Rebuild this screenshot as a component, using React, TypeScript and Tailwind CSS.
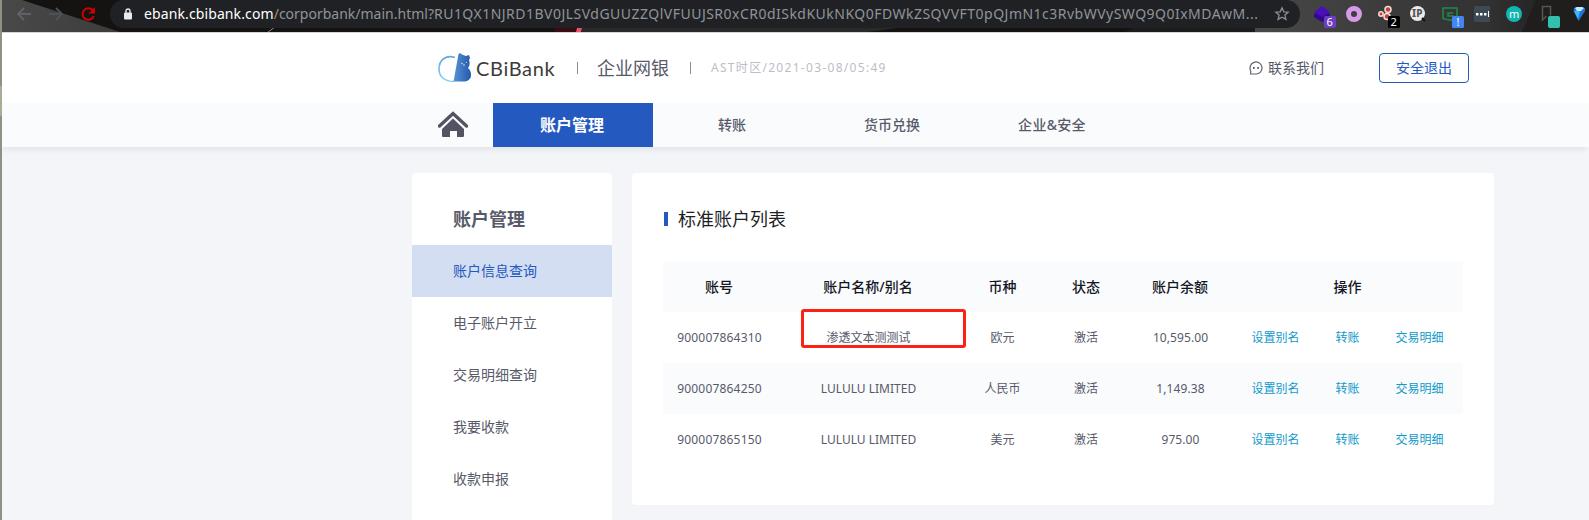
import React from "react";

const rows = [
  { no: "900007864310", name: "渗透文本测测试", cur: "欧元", status: "激活", amount: "10,595.00" },
  { no: "900007864250", name: "LULULU LIMITED", cur: "人民币", status: "激活", amount: "1,149.38" },
  { no: "900007865150", name: "LULULU LIMITED", cur: "美元", status: "激活", amount: "975.00" },
];
const menu = ["账户信息查询", "电子账户开立", "交易明细查询", "我要收款", "收款申报"];
const grid = "grid h-[51px] grid-cols-[112px_186px_83px_84px_104px_231px] items-center justify-items-center";

function Extensions() {
  return (
    <svg className="h-8 w-[287px] shrink-0" viewBox="1302 0 287 32" fontFamily="Noto Sans, sans-serif">
      <path d="M1314 14l8-3 8 3v3l-8 5-8-5z" fill="#33098a" />
      <path d="M1322 6l8 6-8 5-8-5z" fill="#4a0fb8" />
      <rect x="1324" y="16" width="12" height="12" rx="2" fill="#6b3fc0" />
      <text x="1326.500" y="26" fontSize="11" fill="#fff">6</text>
      <circle cx="1354" cy="14" r="5.500" fill="none" stroke="#d59bea" strokeWidth="5" />
      <g fill="#c9403a" stroke="#f4dcda" strokeWidth="1.500">
        <circle cx="1381" cy="14" r="2.200" />
        <circle cx="1388" cy="9.500" r="3" />
        <circle cx="1387" cy="16.500" r="3" />
      </g>
      <rect x="1388" y="16" width="12" height="12" rx="1.500" fill="#000" />
      <text x="1390.500" y="26" fontSize="11" fill="#fff">2</text>
      <circle cx="1417.500" cy="13.500" r="7.500" fill="#ececec" />
      <path d="M1422 18l3 3" stroke="#111" strokeWidth="2" />
      <text x="1412" y="17" fontSize="10" fontWeight="800" fill="#555">IP</text>
      <path d="M1443 19V8h14v10M1443 19h4M1453 13h-5v3h5v4h-6" fill="none" stroke="#1d8a4a" strokeWidth="1.600" />
      <rect x="1452" y="16" width="12" height="12" rx="1.500" fill="#4286f5" />
      <text x="1456.500" y="26" fontSize="11" fill="#fff">!</text>
      <rect x="1474" y="6" width="16" height="16" rx="1" fill="#3d4a55" />
      <path d="M1476 13h2.500v2.500h-2.500zM1480 13h2.500v2.500h-2.500zM1484 13h2.500v2.500h-2.500zM1488 11h1v6h-1z" fill="#fff" />
      <circle cx="1514" cy="14" r="8" fill="#12b5b0" />
      <text x="1509" y="18" fontSize="11" fill="#fff">m</text>
      <path d="M1542.500 6.500h8v9M1542.500 6v14l4-4" fill="none" stroke="#555" strokeWidth="1.500" />
      <rect x="1548" y="16" width="12" height="12" rx="2" fill="#32c1ac" />
      <path d="M1574 8l3-1h5l3 1v3l-6.500 10-5-10z" fill="#1878dc" />
      <path d="M1575 8l2-1h5l2 1-3 3h-4z" fill="#c5e8fb" />
      <path d="M1574 11h6l-2 8z" fill="#46b4f5" />
    </svg>
  );
}

function BrowserBar() {
  return (
    <div className="relative h-[33px] border-b border-[#d5d6d8] bg-[#141312]">
      <svg className="absolute inset-0 h-8 w-full" viewBox="0 0 1589 32" preserveAspectRatio="none">
        <defs>
          <linearGradient id="wedge" x1="0" x2="1">
            <stop offset="0" stopColor="#494949" />
            <stop offset="1" stopColor="#3c3c3c" />
          </linearGradient>
          <linearGradient id="right" x1="0" x2="1">
            <stop offset="0" stopColor="#484848" />
            <stop offset=".8" stopColor="#323232" />
            <stop offset="1" stopColor="#242424" />
          </linearGradient>
        </defs>
        <path d="M0 0h22L120 32H0z" fill="url(#wedge)" />
        <path d="M268 32l7-5" stroke="#888" />
        <path d="M582 28h315l-30 4H582z" fill="#292929" />
        <path d="M1125 32l8-4h122v4z" fill="#1c1c1c" />
        <path d="M1255 0h287l-20 32H1255z" fill="url(#right)" />
        <path d="M1536 0h53v32h-67z" fill="#1f1e1d" />
        <path d="M555 28h22v4h-22z" fill="#3a0d12" />
        <path d="M577 28h5l-1 4h-5z" fill="#f05070" />
      </svg>
      <div className="relative flex h-8">
        <svg className="h-8 w-[110px] shrink-0" viewBox="0 0 110 32" fill="none">
          <path d="M31 14H18M24 8l-6 6 6 6" stroke="#5f6368" strokeWidth="1.800" />
          <path d="M49 14h13M56 8l6 6-6 6" stroke="#4e5154" strokeWidth="1.800" />
          <path d="M93 10.500a5.800 5.800 0 1 0 .8 5.500" stroke="#d00000" strokeWidth="2" />
          <path d="M95 7v6.500h-6.500z" fill="#d00000" />
        </svg>
        <div className="flex h-7 w-[1190px] shrink-0 items-center rounded-r-full rounded-l-full bg-[#202124] pl-[14px] font-['Noto_Sans',sans-serif]">
          <svg className="mr-[12px] h-3 w-2 shrink-0" viewBox="0 0 8 12">
            <path d="M2 5V3a2 2 0 0 1 4 0v2" fill="none" stroke="#e8eaed" strokeWidth="1.400" />
            <rect y="4.500" width="8" height="7" rx="1" fill="#e8eaed" />
          </svg>
          <div className="w-[1120px] shrink-0 text-[14px] leading-7 whitespace-nowrap text-[#909498]">
            <span className="tracking-[0.11px] text-white">ebank.cbibank.com</span>
            <span>/corporbank/main.html?</span>
            <span className="tracking-[0.48px]">RU1QX1NJRD1BV0JLSVdGUUZZQlVFUUJSR0xCR0dISkdKUkNKQ0FDWkZSQVVFT0pQJmN1c3RvbWVySWQ9Q0IxMDAwM...</span>
          </div>
          <svg className="ml-[10px] h-4 w-4 shrink-0" viewBox="0 0 16 16">
            <path d="M8 1.800l1.800 4 4.400.4-3.300 2.900 1 4.300L8 11.200l-3.900 2.200 1-4.300L1.800 6.200l4.400-.4z" fill="none" stroke="#8b8e92" strokeWidth="1.300" />
          </svg>
        </div>
        <div className="w-[2px] shrink-0" />
        <Extensions />
      </div>
    </div>
  );
}

function Logo() {
  return (
    <div className="flex w-[118px] items-center">
      <svg className="h-[30px] w-[33px] shrink-0" viewBox="0 0 33 30">
        <defs>
          <linearGradient id="bear" x1="0" x2="1">
            <stop offset="0" stopColor="#5694d2" />
            <stop offset="1" stopColor="#2459ae" />
          </linearGradient>
          <linearGradient id="ring" x1="0" x2="0" y1="0" y2="1">
            <stop offset="0" stopColor="#65a9dc" />
            <stop offset="1" stopColor="#83d0f6" />
          </linearGradient>
        </defs>
        <path d="M17 4.500C8 1.500 1 7 1 16c0 8 6 12.500 15 12.500" fill="none" stroke="url(#ring)" strokeWidth="1.600" />
        <path d="M20.500 1l1.500-1 2 1.500 4 1.500 3-1 1 3-1 2c1 3 1 5-1 8 3 3 3 5 3 7 0 4-3 6.500-7 6.500H15.500z" fill="url(#bear)" />
        <path d="M23 10l2 1M29 9l-1 1M25 12h2" stroke="#b8d4f0" />
      </svg>
      <div className="ml-[5px] text-[20px] leading-[30px] tracking-[0.65px] text-[#3c3c3c] font-['Lato',sans-serif]">CBiBank</div>
    </div>
  );
}

export default function App() {
  return (
    <div className="relative flex h-[520px] w-[1589px] flex-col overflow-hidden bg-[#f4f5f8] text-[#575a69] font-['Noto_Sans','Noto_Sans_CJK_SC',sans-serif]">
      <BrowserBar />
      <header className="flex h-[70px] shrink-0 items-center bg-white pl-[438px]">
        <Logo />
        <i className="ml-[21px] h-3 w-px bg-[#8a8c98]" />
        <div className="ml-[19px] w-[72px] text-[18px] leading-6">企业网银</div>
        <i className="ml-[21px] h-3 w-px bg-[#8a8c98]" />
        <div className="ml-[20px] w-[180px] text-[12px] tracking-[1.300px] whitespace-nowrap text-[#bcbec7]">AST时区/2021-03-08/05:49</div>
        <div className="ml-[358px] flex items-center text-[14px]">
          <svg className="mr-[5px] h-[14px] w-[14px]" viewBox="0 0 14 14">
            <path d="M1.500 13l.3-3A6 6 0 1 1 7 13z" fill="none" stroke="#626571" strokeWidth="1.200" strokeLinejoin="round" />
            <path d="M4 6h1.700v1.700H4zM8.300 6H10v1.700H8.300z" fill="#505363" />
          </svg>
          <span className="-mt-px">联系我们</span>
        </div>
        <button className="ml-[55px] h-[30px] w-[90px] rounded-[4px] border border-[#2459bf] text-[14px] leading-7 text-[#2459bf]">安全退出</button>
      </header>
      <nav className="z-10 flex h-[44px] shrink-0 bg-[#fafbfd] pl-[438px] text-center text-[14px] leading-[44px] font-medium shadow-[0_5px_6px_-2px_rgba(0,0,0,0.07)]">
        <svg className="mt-2 mr-[25px] h-[26px] w-[30px]" viewBox="0 0 30 26">
          <path d="M1.500 15L15 2.500 28.500 15" fill="none" stroke="#525463" strokeWidth="3.400" strokeLinecap="round" />
          <path d="M15 7.500L26 18v7a1 1 0 0 1-1 1h-6v-6h-7v6H5a1 1 0 0 1-1-1v-7z" fill="#525463" />
        </svg>
        <a className="w-[160px] bg-[#2459bf] pr-[2px] text-[16px] font-bold text-white">账户管理</a>
        <a className="w-[160px] pr-[2px]">转账</a>
        <a className="w-[160px] pr-[2px]">货币兑换</a>
        <a className="w-[160px] pr-[2px] tracking-[0.3px]">企业&amp;安全</a>
      </nav>
      <main className="flex min-h-0 flex-1 items-start gap-5 pt-[26px] pl-[412px]">
        <aside className="h-[400px] w-[200px] rounded bg-white text-[14px]">
          <h2 className="h-[72px] pt-[22px] pl-[41px] text-[18px] leading-[48px] font-bold">账户管理</h2>
          {menu.map((m, i) => (
            <div key={m} className={i === 0 ? "h-[52px] bg-[#d3def2] pl-[41px] leading-[52px] text-[#2459bf]" : "h-[52px] pl-[41px] leading-[52px]"}>{m}</div>
          ))}
        </aside>
        <section className="h-[332px] w-[862px] rounded bg-white px-[31px] pt-[32px]">
          <div className="flex h-[28px] items-center pl-px">
            <i className="h-[14px] w-1 bg-[#2459bf]" />
            <h1 className="ml-[10px] text-[18px] leading-7 text-[#1d1f27]">标准账户列表</h1>
          </div>
          <div className="relative mt-[28px] w-[800px] text-[12px]">
            <div className={`${grid} bg-[#fafbfd] text-[14px] font-medium text-[#15171f]`}>
              <span>账号</span><span>账户名称/别名</span><span>币种</span><span>状态</span><span>账户余额</span><span>操作</span>
            </div>
            {rows.map((r, i) => (
              <div key={r.no} className={i === 1 ? `${grid} bg-[#fafbfd]` : grid}>
                <span className="pl-px tracking-[0.18px]">{r.no}</span>
                <span className="pl-px">{r.name}</span>
                <span>{r.cur}</span>
                <span>{r.status}</span>
                <span className="pl-px tracking-[0.080px]">{r.amount}</span>
                <span className="flex gap-9 text-[#119acb]"><a>设置别名</a><a>转账</a><a>交易明细</a></span>
              </div>
            ))}
            <div className="absolute top-[48px] left-[138px] h-[39px] w-[165px] rounded-[3px] border-3 border-[#fd2015]" />
          </div>
        </section>
      </main>
      <div className="absolute inset-y-0 left-0 z-20 w-[2px] bg-[#8c9384]">
        <div className="mt-[86px] h-[30px] bg-[#a6ae98]" />
      </div>
    </div>
  );
}
